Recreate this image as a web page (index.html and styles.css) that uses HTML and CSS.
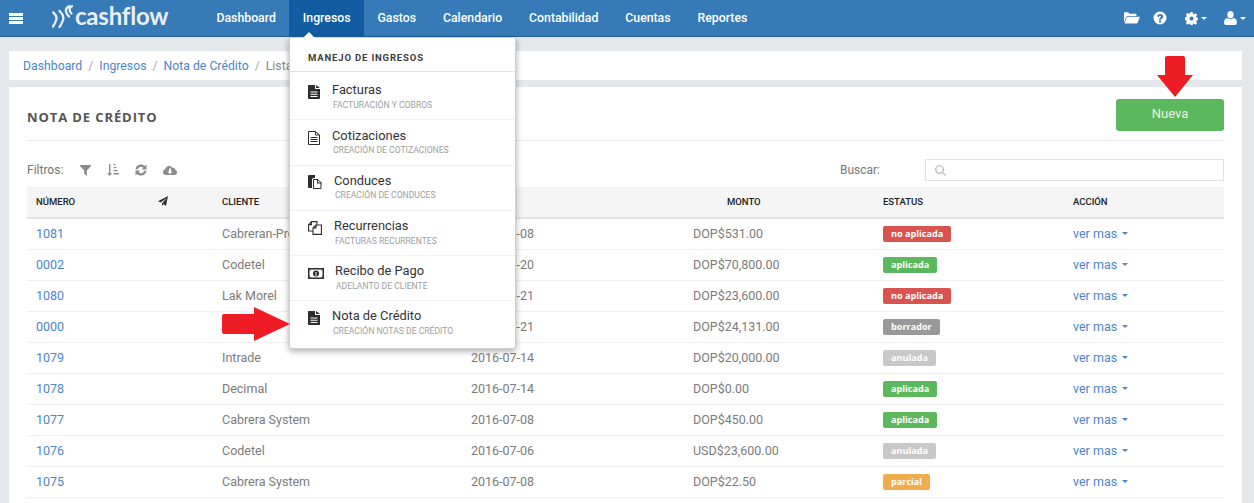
FILE: index.html
```html
<!DOCTYPE html>
<html lang="es">
<head>
<meta charset="utf-8">
<title>Nota de Crédito</title>
<link rel="stylesheet" href="styles.css">
</head>
<body>
<svg class="defs" width="0" height="0" aria-hidden="true">
  <symbol id="i-doc" viewBox="0 0 12 14"><path fill-rule="evenodd" d="M0 .8Q0 0 .8 0H7v4h5v9.2q0 .8-.8.8H.8Q0 14 0 13.200zM8 0l4 3H8zM2.500 6.500v1h7v-1zm0 2.200v1h7v-1zm0 2.200v1h7v-1z"/></symbol>
  <symbol id="i-doc-o" viewBox="0 0 12 14"><path fill="none" stroke="currentColor" d="M.5.500h7l4 3.500v9.500H.5zM7.500.500V4h4M2.500 6.500h7M2.500 8.500h7M2.500 10.500h7"/></symbol>
  <symbol id="i-conduce" viewBox="0 0 14 14"><path d="M0 1q0-1 1-1h6v3H5.500Q4 3 4 4.500V13H1q-1 0-1-1z"/><path fill="none" stroke="currentColor" d="M5.500 4.500h4l3.500 3v6h-7.500z"/><path d="M9 4h1v3.500h3.500v1H9z"/></symbol>
  <symbol id="i-copy" viewBox="0 0 14 14"><path fill="none" stroke="currentColor" stroke-width="1.100" d="M.6 3.600 3.500.6H9V4M.6 3.600v6.400h4.400M3.500.6v3H.6M5 7 8 4h5.400v9.400H5zM8 4v3H5"/></symbol>
  <symbol id="i-money" viewBox="0 0 16 11"><path fill-rule="evenodd" d="M0 0h16v11H0zM1.500 1.500v8h13v-8zM8 2.500a3 3 0 1 1 0 6 3 3 0 0 1 0-6zM7.200 4v.8h.5v2h-.6v.7h1.800v-.7h-.5V4z"/><path d="M1.500 3.200 3 1.500H1.500zM14.500 3.200 13 1.500h1.500zM1.500 7.800 3 9.500H1.500zM14.500 7.800 13 9.500h1.500z"/></symbol>
  <symbol id="i-caret" viewBox="0 0 8 4"><path d="M0 0h8L4 4z"/></symbol>
</svg>

<header class="navbar">
  <button class="burger" aria-label="Menú"><span></span><span></span><span></span></button>
  <a class="brand">
    <svg class="brand-mark" viewBox="0 0 21 23" aria-hidden="true"><path fill="none" stroke="currentColor" stroke-width="2.300" stroke-linecap="round" d="M1.200 7.500q4.300 3.500 3 7.500t-3.200 6.500M7.500 6q5 4.500 3.500 9t-3.500 7M17 1.200q-3.800 1.800-3 5.300t3 5M20 1.200q-2.800 1-2.300 3.800t1.800 3.500"/></svg>
    <span class="brand-name">cashflow</span>
  </a>
  <nav class="nav-main">
    <a>Dashboard</a>
    <a class="active">Ingresos</a>
    <a>Gastos</a>
    <a>Calendario</a>
    <a>Contabilidad</a>
    <a>Cuentas</a>
    <a>Reportes</a>
  </nav>
  <div class="nav-tools">
    <svg class="ic-folder" viewBox="0 0 16 12" aria-hidden="true"><path d="M0 10.500V1.300Q0 .3 1 .3h3.200L5.500 1.800h6q1 0 1 1V4H4Q2.800 4 2.200 5z"/><path d="M2.800 5.300Q3.300 4.800 4 4.800h11.200q.8 0 .5.800l-2 5q-.5 1-1.500 1H1q-.6 0-.3-.5z"/></svg>
    <svg class="ic-help" viewBox="0 0 14 14" aria-hidden="true"><path fill-rule="evenodd" d="M7 .5a6.500 6.500 0 1 1 0 13 6.500 6.500 0 0 1 0-13zM6 9.500v2h2v-2zM4.200 5.200l1.300 1Q6 5 7 5q1 0 1 .8c0 .9-2 1.200-2 3h2c0-1 2.300-1.400 2.300-3.300 0-1.500-1.500-2.500-3.100-2.500-1.500 0-2.500.7-3 2.200z"/></svg>
    <span class="tool">
      <svg class="ic-cog" viewBox="0 0 14 14" aria-hidden="true"><path fill-rule="evenodd" d="M5.800 0h2.400l.4 2 1.100.5 1.700-1.100 1.700 1.700-1.100 1.700.5 1.100 2 .4v2.400l-2 .4-.5 1.100 1.100 1.700-1.700 1.700-1.700-1.100-1.100.5-.4 2H5.800l-.4-2-1.100-.5-1.700 1.100-1.700-1.700 1.100-1.700-.5-1.100-2-.4V5.800l2-.4.5-1.100-1.100-1.700 1.700-1.700 1.700 1.100 1.100-.5zM7 4.800a2.200 2.200 0 1 0 0 4.400 2.200 2.200 0 0 0 0-4.400z"/></svg>
      <svg class="caret-sm" aria-hidden="true"><use href="#i-caret"/></svg>
    </span>
    <span class="tool">
      <svg class="ic-user" viewBox="0 0 13 14" aria-hidden="true"><path d="M6.500 0C8.500 0 9.700 1.500 9.700 3.600 9.700 5.600 8.700 7.400 6.500 7.400S3.300 5.600 3.300 3.600C3.300 1.500 4.500 0 6.500 0zM3.500 6.900Q4.800 8.300 6.500 8.300T9.500 6.900Q13 7.300 13 11.800 13 14 11 14H2Q0 14 0 11.800 0 7.300 3.500 6.900z"/></svg>
      <svg class="caret-sm" aria-hidden="true"><use href="#i-caret"/></svg>
    </span>
  </div>
</header>

<main class="page">
  <ol class="breadcrumb">
    <li><a>Dashboard</a></li>
    <li><a>Ingresos</a></li>
    <li><a>Nota de Crédito</a></li>
    <li class="current">Listado</li>
  </ol>

  <section class="card">
    <div class="card-head">
      <h1>NOTA DE CRÉDITO</h1>
      <button class="btn-new">Nueva</button>
    </div>

    <div class="toolbar">
      <div class="filters">
        <span class="filters-label">Filtros:</span>
        <svg class="f-ic f-funnel" viewBox="0 0 10 10" aria-hidden="true"><path d="M0 0h10v1L6.200 5v5L3.800 8V5L0 1z"/></svg>
        <svg class="f-ic" viewBox="0 0 12 12" aria-hidden="true"><path d="M2 0h1.400v9H5L2.700 12 .4 9H2zM6.500 0h2v1.200h-2zM6.500 3h3v1.200h-3zM6.500 6h4.200v1.200H6.500zM6.500 9h5.500v1.500H6.500z"/></svg>
        <svg class="f-ic" viewBox="0 0 12 12" aria-hidden="true"><path d="M.5 5.200C1 2.200 3.200.5 6 .5c1.500 0 2.900.6 3.900 1.600L11.500 .6V5.500H6.700L8.400 3.800C7.800 3.200 6.900 2.800 6 2.800 4.400 2.800 3.300 3.800 2.800 5.200zM11.500 6.800C11 9.800 8.800 11.500 6 11.500c-1.500 0-2.900-.6-3.900-1.600L.5 11.400V6.500h4.800L3.600 8.200C4.200 8.800 5.100 9.200 6 9.200c1.600 0 2.700-1 3.200-2.400z"/></svg>
        <svg class="f-ic f-cloud" viewBox="0 0 14 10" aria-hidden="true"><path fill-rule="evenodd" d="M3.300 10Q0 10 0 7 0 4.800 2.200 4.300 2.800 1.500 5.500 1 8 .5 9.300 2.800 12 2.300 12.300 4.800 14 5.300 14 7.300 14 10 11 10zM6 3.500v3H4.300L7 9l2.700-2.500H8v-3z"/></svg>
      </div>
      <label class="search">
        <span class="search-label">Buscar:</span>
        <span class="search-box">
          <svg class="ic-search" viewBox="0 0 12 12" aria-hidden="true"><path fill-rule="evenodd" d="M5 0a5 5 0 0 1 4 8l3 3-1 1-3-3a5 5 0 1 1-3-9zm0 1.700a3.300 3.300 0 1 0 0 6.600 3.300 3.300 0 0 0 0-6.600z"/></svg>
        </span>
      </label>
    </div>

    <table class="grid">
      <colgroup>
        <col class="c-num"><col class="c-send"><col class="c-client"><col class="c-date"><col class="c-amount"><col class="c-status"><col class="c-action">
      </colgroup>
      <thead>
        <tr>
          <th>NÚMERO</th>
          <th><svg class="ic-send" viewBox="0 0 10 10" aria-hidden="true"><path d="M10 0 8 10 5.500 8.200 4 10V7.600L8.500 2 2.800 6.500 0 5.200z"/></svg></th>
          <th>CLIENTE</th>
          <th>FECHA</th>
          <th class="th-amount">MONTO</th>
          <th>ESTATUS</th>
          <th>ACCIÓN</th>
        </tr>
      </thead>
      <tbody>
        <tr><td><a>1081</a></td><td></td><td>Cabreran-Pro</td><td>2016-08-08</td><td>DOP$531.00</td><td><span class="badge red">no aplicada</span></td><td><a class="more">ver mas<svg class="caret-more" aria-hidden="true"><use href="#i-caret"/></svg></a></td></tr>
        <tr><td><a>0002</a></td><td></td><td>Codetel</td><td>2016-07-20</td><td>DOP$70,800.00</td><td><span class="badge green">aplicada</span></td><td><a class="more">ver mas<svg class="caret-more" aria-hidden="true"><use href="#i-caret"/></svg></a></td></tr>
        <tr><td><a>1080</a></td><td></td><td>Lak Morel</td><td>2016-07-21</td><td>DOP$23,600.00</td><td><span class="badge red">no aplicada</span></td><td><a class="more">ver mas<svg class="caret-more" aria-hidden="true"><use href="#i-caret"/></svg></a></td></tr>
        <tr><td><a>0000</a></td><td></td><td>Intrade</td><td>2016-07-21</td><td>DOP$24,131.00</td><td><span class="badge gray">borrador</span></td><td><a class="more">ver mas<svg class="caret-more" aria-hidden="true"><use href="#i-caret"/></svg></a></td></tr>
        <tr><td><a>1079</a></td><td></td><td>Intrade</td><td>2016-07-14</td><td>DOP$20,000.00</td><td><span class="badge light">anulada</span></td><td><a class="more">ver mas<svg class="caret-more" aria-hidden="true"><use href="#i-caret"/></svg></a></td></tr>
        <tr><td><a>1078</a></td><td></td><td>Decimal</td><td>2016-07-14</td><td>DOP$0.00</td><td><span class="badge green">aplicada</span></td><td><a class="more">ver mas<svg class="caret-more" aria-hidden="true"><use href="#i-caret"/></svg></a></td></tr>
        <tr><td><a>1077</a></td><td></td><td>Cabrera System</td><td>2016-07-08</td><td>DOP$450.00</td><td><span class="badge green">aplicada</span></td><td><a class="more">ver mas<svg class="caret-more" aria-hidden="true"><use href="#i-caret"/></svg></a></td></tr>
        <tr><td><a>1076</a></td><td></td><td>Codetel</td><td>2016-07-06</td><td>USD$23,600.00</td><td><span class="badge light">anulada</span></td><td><a class="more">ver mas<svg class="caret-more" aria-hidden="true"><use href="#i-caret"/></svg></a></td></tr>
        <tr><td><a>1075</a></td><td></td><td>Cabrera System</td><td>2016-07-08</td><td>DOP$22.50</td><td><span class="badge orange">parcial</span></td><td><a class="more">ver mas<svg class="caret-more" aria-hidden="true"><use href="#i-caret"/></svg></a></td></tr>
      </tbody>
    </table>
  </section>
</main>

<div class="menu">
  <div class="menu-title">MANEJO DE INGRESOS</div>
  <a class="menu-item mi-1"><svg class="mi-ic w12"><use href="#i-doc"/></svg><span class="mi-text"><b>Facturas</b><small>FACTURACIÓN Y COBROS</small></span></a>
  <a class="menu-item mi-2"><svg class="mi-ic w12"><use href="#i-doc-o"/></svg><span class="mi-text"><b>Cotizaciones</b><small>CREACIÓN DE COTIZACIONES</small></span></a>
  <a class="menu-item mi-3"><svg class="mi-ic w14"><use href="#i-conduce"/></svg><span class="mi-text"><b>Conduces</b><small>CREACIÓN DE CONDUCES</small></span></a>
  <a class="menu-item mi-4"><svg class="mi-ic w14"><use href="#i-copy"/></svg><span class="mi-text"><b>Recurrencias</b><small>FACTURAS RECURRENTES</small></span></a>
  <a class="menu-item mi-5"><svg class="mi-ic w16"><use href="#i-money"/></svg><span class="mi-text"><b>Recibo de Pago</b><small>ADELANTO DE CLIENTE</small></span></a>
  <a class="menu-item mi-6"><svg class="mi-ic w12"><use href="#i-doc"/></svg><span class="mi-text"><b>Nota de Crédito</b><small>CREACIÓN NOTAS DE CRÉDITO</small></span></a>
</div>

<svg class="arrow arrow-right" viewBox="0 0 68 34" aria-hidden="true"><path d="M2 7H32V0L68 17 32 34V27H2Q0 27 0 25V9Q0 7 2 7z"/></svg>
<svg class="arrow arrow-down" viewBox="0 0 36 41" aria-hidden="true"><path d="M10 0H26Q28 0 28 2V19H36L18 41 0 19H8V2Q8 0 10 0z"/></svg>
</body>
</html>
```

FILE: styles.css
```css
* { box-sizing: border-box; }
html, body { height: 100%; overflow: hidden; }
body {
  margin: 0;
  background: #e4e8eb;
  color: #6f6f6f;
  font-family: Roboto, "Liberation Sans", Arial, sans-serif;
  font-size: 12px;
}
a { color: #4a86c8; text-decoration: none; }
.defs { position: absolute; }

/* top bar */
.navbar {
  display: flex;
  align-items: stretch;
  height: 37px;
  background: #377ab8;
  border-bottom: 1px solid #1f5f9f;
  color: #fff;
}
.burger {
  display: flex;
  flex-direction: column;
  justify-content: center;
  gap: 1px;
  width: 14px;
  margin-left: 9px;
  padding: 0;
  border: 0;
  background: none;
}
.burger span { display: block; width: 14px; height: 3px; background: #fff; }
.brand { display: flex; align-items: center; width: 151px; margin-left: 29px; color: #e9f0f7; }
.brand-mark { width: 21px; height: 23px; margin-top: -3px; color: #e9f0f7; }
.brand-name {
  margin: -4px 0 0 2px;
  font-family: Lato, "Open Sans", sans-serif;
  font-size: 24px;
  font-weight: 700;
  line-height: 32px;
  letter-spacing: -.2px;
}
.nav-main { display: flex; }
.nav-main a {
  display: flex;
  align-items: center;
  padding: 0 13.500px;
  color: #fff;
  font-size: 12.280px;
  font-weight: 500;
  height: 36px;
}
.nav-main a.active { background: #125ca1; }
.nav-tools { display: flex; align-items: center; margin-left: auto; padding-right: 8px; }
.nav-tools svg { fill: #fff; display: block; }
.ic-folder { width: 16px; height: 12px; margin-right: 13px; }
.ic-help { width: 14px; height: 14px; margin-right: 18px; }
.tool { display: flex; align-items: center; }
.tool:first-of-type { margin-right: 17px; }
.ic-cog { width: 13px; height: 13px; }
.ic-user { width: 13px; height: 14px; }
.caret-sm { width: 6px; height: 3px; margin-left: 3px; }

/* page */
.page { padding: 14px 12px 0 9px; }
.breadcrumb {
  display: flex;
  height: 29px;
  margin: 0;
  padding: 0 14px;
  align-items: center;
  list-style: none;
  background: #fff;
  font-size: 12.250px;
}
.breadcrumb li + li::before { content: "/"; padding: 0 6px; color: #aaa; }
.breadcrumb .current { color: #888; }

.card {
  height: 420px;
  margin-top: 7px;
  padding: 0 18px;
  background: #fff;
}
.card-head {
  display: flex;
  justify-content: space-between;
  align-items: center;
  height: 54px;
  border-bottom: 1px solid #eaeaea;
}
.card-head h1 {
  margin: 6px 0 0;
  font-family: "Open Sans", sans-serif;
  font-size: 13px;
  font-weight: 700;
  letter-spacing: .9px;
  color: #555;
}
.btn-new {
  width: 108px;
  height: 32px;
  margin-top: 2px;
  padding: 0 0 2px;
  border: 0;
  border-radius: 3px;
  background: #5cb85c;
  color: #eaf6ea;
  font-family: Roboto, sans-serif;
  font-size: 13px;
}

.toolbar {
  display: flex;
  justify-content: space-between;
  align-items: center;
  height: 46px;
  padding-top: 12px;
}
.filters { display: flex; align-items: center; }
.filters-label { color: #777; margin-right: 17px; }
.f-ic { width: 12px; height: 12px; fill: #8a8a8a; margin-right: 16px; }
.f-funnel { width: 11px; height: 11px; margin-right: 16px; }
.f-cloud { width: 14px; height: 10px; }
.search { display: flex; align-items: center; }
.search-label { color: #777; margin-right: 45px; }
.search-box {
  display: flex;
  align-items: center;
  width: 299px;
  height: 22px;
  padding-left: 9px;
  border: 1px solid #e3e3e3;
  background: #fff;
}
.ic-search { width: 11px; height: 11px; fill: #c4c4c4; }

.grid {
  width: 100%;
  table-layout: fixed;
  border-collapse: collapse;
  font-size: 12.500px;
}
.c-num { width: 122px; }
.c-send { width: 64px; }
.c-client { width: 249px; }
.c-date { width: 222px; }
.c-amount { width: 190px; }
.c-status { width: 190px; }
.c-action { width: 160px; }
.grid th {
  height: 31px;
  padding: 0 9px 2px;
  text-align: left;
  background: #f5f5f5;
  border-bottom: 2px solid #e3e3e3;
  color: #222;
  font-size: 9.500px;
  font-weight: 500;
}
.grid .th-amount { padding-left: 43px; }
.ic-send { display: block; width: 10px; height: 10px; fill: #333; }
.grid td {
  height: 31px;
  padding: 0 9px;
  border-bottom: 1px solid #f0f0f0;
  white-space: nowrap;
  color: #7b7b7b;
}
.badge {
  display: inline-block;
  height: 16px;
  padding: 0 8px;
  border-radius: 2px;
  color: #fff;
  font-family: "Open Sans", sans-serif;
  font-size: 9.100px;
  font-weight: 700;
  line-height: 16px;
  vertical-align: middle;
}
.red { background: #d9534f; }
.green { background: #5cb85c; }
.gray { background: #999; }
.light { background: #c8c8c8; }
.orange { background: #f0ad4e; }
.more { display: inline-flex; align-items: center; }
.caret-more { width: 6px; height: 3px; margin-left: 5px; fill: #4a86c8; }

/* overlays */
.menu {
  position: absolute;
  left: 289px;
  top: 38px;
  width: 227px;
  height: 311px;
  background: #fff;
  border: 1px solid #cfcfcf;
  border-top: 0;
  border-radius: 0 0 3px 3px;
  box-shadow: 0 2px 6px rgba(0, 0, 0, .35);
}
.menu::before {
  content: "";
  position: absolute;
  left: 13px;
  top: -6px;
  border: 6px solid transparent;
  border-top: 0;
  border-bottom-color: #fff;
}
.menu-title {
  height: 34px;
  padding: 14px 0 0 18px;
  border-bottom: 1px solid #e3e3e3;
  color: #3c3c3c;
  font-size: 9.500px;
  font-weight: 700;
  letter-spacing: .85px;
  line-height: 11px;
}
.menu-item {
  display: flex;
  height: 45px;
  padding: 8px 0 0 18px;
  border-bottom: 1px solid #f2f2f2;
  color: #333;
}
.mi-1 { height: 48px; padding-top: 11px; }
.mi-2 { height: 46px; padding-top: 9px; }
.mi-6 { height: 48px; border-bottom: 0; }
.mi-ic { flex: none; height: 14px; margin-top: 2px; fill: #2d2d2d; color: #2d2d2d; }
.mi-3 .mi-ic { margin-top: 1px; }
.w12 { width: 12px; margin-right: 12px; }
.w14 { width: 14px; margin-right: 12px; }
.w16 { width: 16px; height: 11px; margin-top: 4px; margin-right: 11px; }
.mi-text { display: flex; flex-direction: column; }
.mi-text b { font-weight: 400; font-size: 12.850px; line-height: 14px; color: #333; }
.mi-text small { margin-top: 4px; padding-left: 1px; font-size: 8.600px; line-height: 9px; color: #a0a0a0; }
.mi-2 small, .mi-3 small { margin-top: 3px; }

.arrow { position: absolute; fill: #ee1c25; }
.arrow-right { left: 222px; top: 307px; width: 68px; height: 34px; }
.arrow-down { left: 1157px; top: 56px; width: 36px; height: 41px; }
```
